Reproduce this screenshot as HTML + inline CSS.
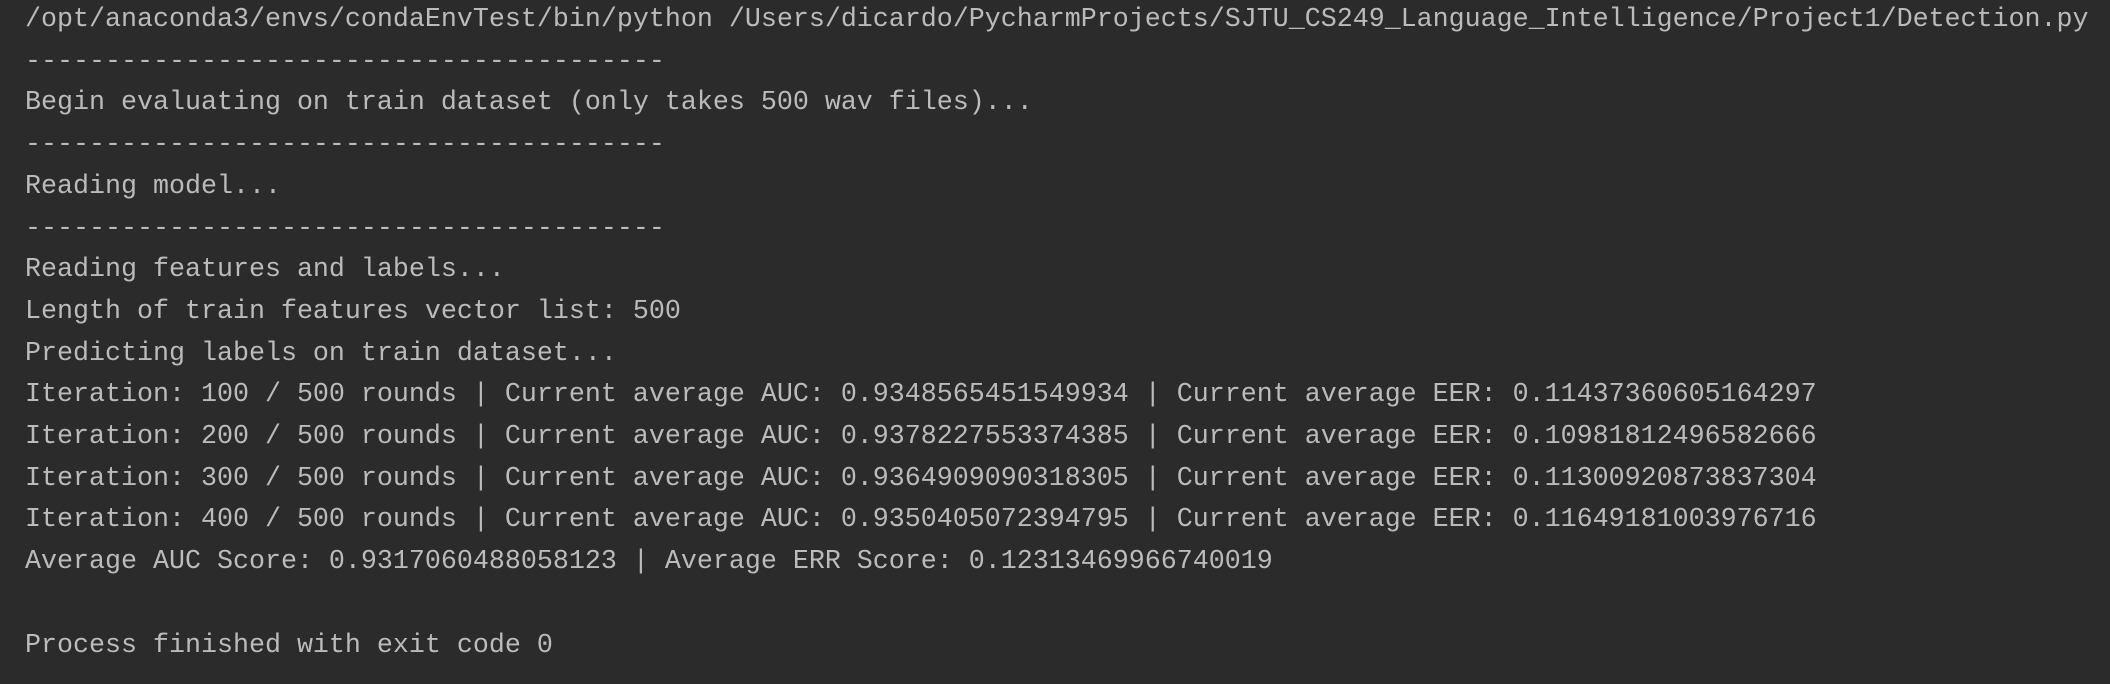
<!DOCTYPE html>
<html><head><meta charset="utf-8"><style>
html,body{margin:0;padding:0;background:#2b2b2b;width:2110px;height:684px;overflow:hidden}
pre{position:absolute;left:25px;top:0px;margin:0;font-family:"Liberation Mono",monospace;font-size:26.67px;line-height:41.7px;color:#bbbbbb;white-space:pre}
</style></head><body><pre>/opt/anaconda3/envs/condaEnvTest/bin/python /Users/dicardo/PycharmProjects/SJTU_CS249_Language_Intelligence/Project1/Detection.py
----------------------------------------
Begin evaluating on train dataset (only takes 500 wav files)...
----------------------------------------
Reading model...
----------------------------------------
Reading features and labels...
Length of train features vector list: 500
Predicting labels on train dataset...
Iteration: 100 / 500 rounds | Current average AUC: 0.9348565451549934 | Current average EER: 0.11437360605164297
Iteration: 200 / 500 rounds | Current average AUC: 0.9378227553374385 | Current average EER: 0.10981812496582666
Iteration: 300 / 500 rounds | Current average AUC: 0.9364909090318305 | Current average EER: 0.11300920873837304
Iteration: 400 / 500 rounds | Current average AUC: 0.9350405072394795 | Current average EER: 0.11649181003976716
Average AUC Score: 0.9317060488058123 | Average ERR Score: 0.12313469966740019

Process finished with exit code 0</pre></body></html>
